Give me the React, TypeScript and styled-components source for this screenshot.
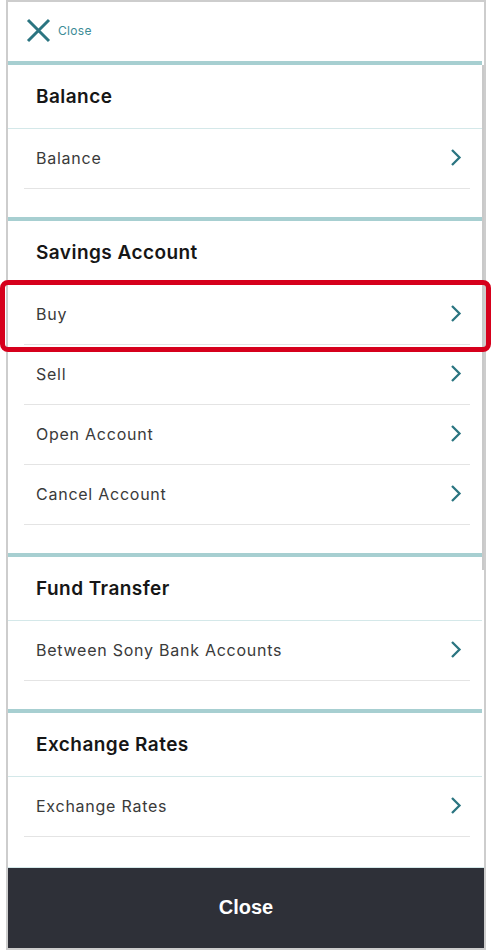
import * as React from 'react';
import styled, { createGlobalStyle } from 'styled-components';

const colors = {
    frame: '#cdcdcd',
    teal: '#a7cfd1',
    tealLight: '#d4e8e9',
    accent: '#2b7581',
    accentText: '#3d8c96',
    rowLine: '#e4e4e4',
    text: '#3a3a3a',
    heading: '#161616',
    footer: '#2e3038',
    mark: '#d6001c',
    thumb: '#c9c9c9',
};

const GlobalStyle = createGlobalStyle`
    html, body {
        margin: 0;
        padding: 0;
        background: #fff;
    }
    body {
        font-family: Inter, "Noto Sans", "Liberation Sans", sans-serif;
        -webkit-font-smoothing: antialiased;
    }
`;

const Page = styled.div`
    position: relative;
    width: 492px;
    height: 950px;
    padding-left: 6px;
    box-sizing: border-box;
`;

const Frame = styled.div`
    width: 480px;
    height: 950px;
    box-sizing: border-box;
    border: 2px solid ${colors.frame};
    display: flex;
    flex-direction: column;
    background: #fff;
`;

const TopBar = styled.div`
    height: 59px;
    flex: none;
    display: flex;
    align-items: center;
    gap: 7px;
    padding: 0 0 2px 18px;
    box-sizing: border-box;
`;

const CloseLink = styled.span`
    font-size: 12px;
    color: ${colors.accentText};
    letter-spacing: 0.3px;
`;

const ScrollArea = styled.div`
    flex: 1;
    display: flex;
    min-height: 0;
    overflow: hidden;
`;

const List = styled.div`
    flex: 1;
    min-width: 0;
`;

const ScrollTrack = styled.div`
    width: 2px;
    flex: none;
    padding-top: 4px;
`;

const ScrollThumb = styled.div`
    height: 505px;
    background: ${colors.thumb};
`;

const Section = styled.section`
    border-top: 4px solid ${colors.teal};
    padding-bottom: 28px;
`;

const SectionTitle = styled.h2`
    margin: 0;
    height: 64px;
    box-sizing: border-box;
    display: flex;
    align-items: center;
    padding-left: 28px;
    font-size: 19px;
    font-weight: 600;
    color: ${colors.heading};
    letter-spacing: 0.45px;
    border-bottom: 1px solid ${colors.tealLight};
`;

const Row = styled.div`
    height: 60px;
    box-sizing: border-box;
    margin: 0 12px 0 16px;
    padding: 0 8px 2px 12px;
    display: flex;
    align-items: center;
    justify-content: space-between;
    border-bottom: 1px solid ${colors.rowLine};
    font-size: 16px;
    color: ${colors.text};
    letter-spacing: 0.75px;
`;

const Footer = styled.div`
    height: 81px;
    flex: none;
    background: ${colors.footer};
    border-top: 1px solid ${colors.tealLight};
    box-sizing: border-box;
    display: flex;
    align-items: center;
    justify-content: center;
    padding-bottom: 2px;
    color: #fff;
    font-family: "Liberation Sans", Arial, sans-serif;
    font-weight: 700;
    font-size: 20px;
`;

const Highlight = styled.div`
    position: absolute;
    left: 0;
    top: 280px;
    width: 491px;
    height: 72px;
    box-sizing: border-box;
    border: 5px solid ${colors.mark};
    border-radius: 8px;
    pointer-events: none;
`;

const CrossIcon = () => (
    <svg width="25" height="25" viewBox="0 0 25 25">
        <path d="M2 2 L23 23 M23 2 L2 23" stroke={colors.accent} strokeWidth="3" fill="none" />
    </svg>
);

const Chevron = () => (
    <svg width="12" height="19" viewBox="0 0 12 19">
        <polyline points="2,2 9.5,9.5 2,17" stroke={colors.accent} strokeWidth="2.3" fill="none" />
    </svg>
);

const menu = [
    { title: 'Balance', items: ['Balance'] },
    { title: 'Savings Account', items: ['Buy', 'Sell', 'Open Account', 'Cancel Account'] },
    { title: 'Fund Transfer', items: ['Between Sony Bank Accounts'] },
    { title: 'Exchange Rates', items: ['Exchange Rates'] },
];

export default function App() {
    return (
        <Page>
            <GlobalStyle />
            <Frame>
                <TopBar>
                    <CrossIcon />
                    <CloseLink>Close</CloseLink>
                </TopBar>
                <ScrollArea>
                    <List>
                        {menu.map(section => (
                            <Section key={section.title}>
                                <SectionTitle>{section.title}</SectionTitle>
                                {section.items.map(item => (
                                    <Row key={item}>
                                        <span>{item}</span>
                                        <Chevron />
                                    </Row>
                                ))}
                            </Section>
                        ))}
                    </List>
                    <ScrollTrack>
                        <ScrollThumb />
                    </ScrollTrack>
                </ScrollArea>
                <Footer>Close</Footer>
            </Frame>
            <Highlight />
        </Page>
    );
}
